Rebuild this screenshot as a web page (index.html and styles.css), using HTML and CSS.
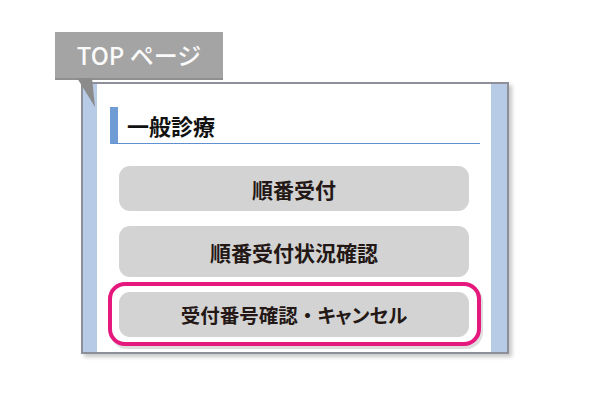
FILE: index.html
```html
<!DOCTYPE html>
<html lang="ja">
<head>
<meta charset="utf-8">
<link rel="stylesheet" href="styles.css">
</head>
<body>
<div class="stage">
  <div class="frame">
    <div class="page">
      <h2 class="heading">一般診療</h2>
      <div class="buttons">
        <div class="btn btn-short">順番受付</div>
        <div class="btn btn-tall">順番受付状況確認</div>
        <div class="ring">
          <div class="btn btn-short btn-small">受付番号確認・<span class="kana">キャンセル</span></div>
        </div>
      </div>
    </div>
  </div>
  <div class="tab">TOP ページ</div>
  <svg class="tail" width="30" height="40" viewBox="0 0 30 40">
    <polygon points="2,0 17,0 20,29" fill="#8b8b8b"/>
  </svg>
</div>
</body>
</html>
```

FILE: styles.css
```css
html, body {
  margin: 0;
  background: #ffffff;
}
body {
  font-family: "Noto Sans CJK JP", "Noto Sans", sans-serif;
  color: #231815;
}
.stage {
  position: relative;
  width: 600px;
  height: 400px;
  padding: 82px 0 0 81px;
  box-sizing: border-box;
}
.frame {
  width: 428px;
  height: 272px;
  box-sizing: border-box;
  border: 2px solid #8e9099;
  background: #b7cbe7;
  padding: 0 16px 0 14px;
  display: flex;
  box-shadow: 3px 3px 4px rgba(0, 0, 0, 0.22);
}
.page {
  flex: 1;
  background: #ffffff;
  padding: 23px 11px 0 13px;
}
.heading {
  margin: 0;
  height: 36px;
  box-sizing: content-box;
  border-left: 8px solid #6f9cd4;
  border-bottom: 1px solid #5f90d0;
  padding-left: 9px;
  font-size: 22px;
  font-weight: 700;
  line-height: 36px;
  color: #111111;
}
.buttons {
  margin: 22px 0 0 9px;
  width: 350px;
  display: flex;
  flex-direction: column;
  gap: 15px;
}
.btn {
  background: #d3d3d3;
  border-radius: 11px;
  display: flex;
  align-items: center;
  justify-content: center;
  font-size: 21px;
  font-weight: 700;
  color: #231815;
}
.btn-small {
  font-size: 19.5px;
}
.kana {
  font-feature-settings: "palt";
}
.btn-short {
  height: 45px;
}
.btn-tall {
  height: 51px;
}
.ring {
  margin: -10px 0 0 -11px;
  width: 373px;
  box-sizing: border-box;
  border: 4px solid #e5197d;
  border-radius: 17px;
  padding: 6px 8px 5px 7px;
  background: #ffffff;
  box-shadow: 2px 3px 0 #dedede;
}
.tab {
  position: absolute;
  left: 55px;
  top: 32px;
  width: 168px;
  height: 46px;
  background: #a4a4a4;
  box-shadow: 0 2px 0 #8f8f8f;
  color: #fafafa;
  font-size: 24px;
  font-weight: 500;
  line-height: 46px;
  text-align: center;
}
.tail {
  position: absolute;
  left: 75px;
  top: 78px;
}
```
